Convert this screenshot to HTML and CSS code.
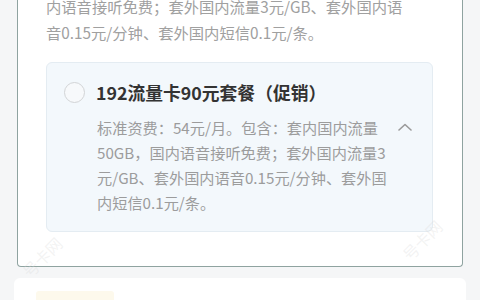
FILE: index.html
```html
<!DOCTYPE html>
<html lang="zh-CN">
<head>
<meta charset="utf-8">
<title>套餐选择</title>
<link rel="stylesheet" href="styles.css">
</head>
<body>
<div class="page">
  <section class="plan-card">
    <p class="plan-text">内语音接听免费；套外国内流量3元/GB、套外国内语<br>音0.15元/分钟、套外国内短信0.1元/条。</p>
    <div class="option">
      <div class="option-head">
        <span class="radio"></span>
        <span class="option-title">192流量卡90元套餐（促销）</span>
      </div>
      <div class="option-body">
        <p class="option-desc">标准资费：54元/月。包含：套内国内流量<br>50GB，国内语音接听免费；套外国内流量3<br>元/GB、套外国内语音0.15元/分钟、套外国<br>内短信0.1元/条。</p>
        <svg class="chevron" width="14" height="8" viewBox="0 0 14 8"><path d="M1 7 L7 1.5 L13 7" fill="none" stroke="#9a9a9a" stroke-width="1.6" stroke-linecap="round" stroke-linejoin="round"/></svg>
      </div>
    </div>
  </section>
  <section class="next-card">
    <span class="next-tag"></span>
  </section>
  <span class="watermark wm-left">号卡网</span>
  <span class="watermark wm-right">号卡网</span>
</div>
</body>
</html>
```

FILE: styles.css
```css
html, body {
  margin: 0;
  padding: 0;
}
body {
  width: 480px;
  height: 300px;
  overflow: hidden;
  background: #f5f6f7;
  font-family: "Noto Sans CJK SC", "Noto Sans", sans-serif;
}
.page {
  position: relative;
  height: 300px;
  overflow: hidden;
}
.plan-card {
  margin: 0 17px 0 17px;
  background: #ffffff;
  border: 1.5px solid #8fa3a0;
  border-top: 0;
  border-radius: 0 0 4px 4px;
  padding: 0 29px 34px 28px;
}
.plan-text {
  margin: -7px 0 0 0;
  font-size: 15.3px;
  line-height: 26px;
  color: #a0a0a0;
  white-space: nowrap;
}
.option {
  margin-top: 17px;
  background: #f3f8fc;
  border: 1px solid #e4ecf2;
  border-radius: 6px;
  padding: 17px 20px 16px 17px;
}
.option-head {
  display: flex;
  align-items: center;
  gap: 11px;
}
.radio {
  width: 19px;
  height: 19px;
  border: 1.5px solid #d2d4d6;
  border-radius: 50%;
  background: #f7f9fb;
  flex: none;
}
.option-title {
  font-size: 17.8px;
  line-height: 24px;
  font-weight: 700;
  color: #333333;
  white-space: nowrap;
}
.option-body {
  display: flex;
  align-items: flex-start;
  margin-top: 10.5px;
  padding-left: 33px;
}
.option-desc {
  margin: 0;
  font-size: 15.2px;
  line-height: 25px;
  color: #9c9c9c;
  white-space: nowrap;
}
.chevron {
  margin-left: auto;
  margin-top: 8px;
  flex: none;
}
.next-card {
  margin: 11px 14px 0 14px;
  height: 40px;
  background: #ffffff;
  border-radius: 6px;
  padding: 13px 0 0 22px;
  box-sizing: border-box;
}
.next-tag {
  display: block;
  width: 78px;
  height: 14px;
  background: #fdf9ec;
  border-radius: 3px;
}
.watermark {
  position: absolute;
  font-size: 16px;
  color: rgba(215, 215, 215, 0.3);
  transform: rotate(-45deg);
  white-space: nowrap;
}
.wm-left {
  left: 18px;
  top: 245px;
}
.wm-right {
  left: 398px;
  top: 228px;
}
```
